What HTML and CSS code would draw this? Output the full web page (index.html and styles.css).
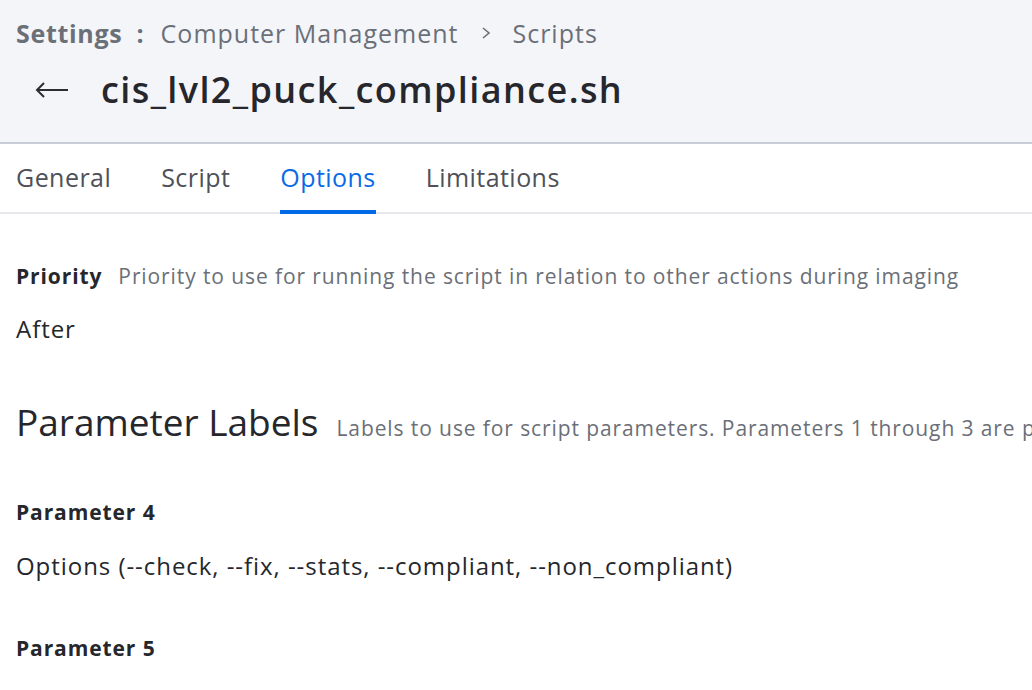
FILE: index.html
```html
<!DOCTYPE html>
<html>
<head>
<meta charset="utf-8">
<link rel="stylesheet" href="styles.css">
</head>
<body>
<header class="head">
  <nav class="crumbs">
    <span class="crumb-root">Settings</span>
    <span class="crumb-sep colon">:</span>
    <span class="crumb">Computer Management</span>
    <span class="crumb-sep chev"><svg width="14" height="14" viewBox="0 0 14 14"><path d="M4 2 L10 7 L4 12" fill="none" stroke="#6b6f78" stroke-width="1.6"/></svg></span>
    <span class="crumb">Scripts</span>
  </nav>
  <div class="title-row">
    <svg class="back" width="34" height="16" viewBox="0 0 34 16"><path d="M33 8 H2 M9 1 L2 8 L9 15" fill="none" stroke="#2b2d33" stroke-width="2"/></svg>
    <h1 class="title">cis_lvl2_puck_compliance.sh</h1>
  </div>
</header>
<div class="tabs">
  <div class="tab">General</div>
  <div class="tab">Script</div>
  <div class="tab active">Options</div>
  <div class="tab">Limitations</div>
</div>
<main class="content">
  <div class="field">
    <div class="label-row"><span class="label">Priority</span><span class="desc">Priority to use for running the script in relation to other actions during imaging</span></div>
    <div class="value">After</div>
  </div>
  <div class="section-head">
    <h2 class="section-title">Parameter Labels</h2>
    <span class="desc">Labels to use for script parameters. Parameters 1 through 3 are predefined</span>
  </div>
  <div class="param">
    <div class="label">Parameter 4</div>
    <div class="value">Options (--check, --fix, --stats, --compliant, --non_compliant)</div>
  </div>
  <div class="param">
    <div class="label">Parameter 5</div>
  </div>
</main>
</body>
</html>
```
FILE: styles.css
```css
* { box-sizing: border-box; }
html, body { margin: 0; padding: 0; }
body {
  width: 1032px;
  height: 690px;
  overflow: hidden;
  font-family: "Open Sans", Lato, sans-serif;
  background: #fff;
  color: #25272c;
}
.head {
  background: #f4f5f9;
  height: 144px;
  border-bottom: 2px solid #c9ced6;
  padding: 17px 0 0 16px;
}
.crumbs {
  display: flex;
  align-items: center;
  font-size: 25px;
  letter-spacing: 1px;
  color: #6b6f78;
  white-space: nowrap;
  height: 32px;
}
.crumb-root { font-weight: 700; color: #6b6f78; letter-spacing: 0.7px; }
.colon { margin: 0 16px 0 14px; font-weight: 700; }
.chev { margin: 0 19px 0 21px; display: flex; align-items: center; }
.title-row {
  display: flex;
  align-items: center;
  margin-top: 16px;
  padding-left: 19px;
}
.back { margin-right: 32px; }
.title {
  margin: 0;
  font-size: 36px;
  font-weight: 600;
  letter-spacing: 1.4px;
  color: #25272c;
}
.tabs {
  display: flex;
  gap: 50px;
  padding: 0 16px;
  height: 70px;
  border-bottom: 2px solid #e7e9ed;
}
.tab {
  font-size: 25px;
  letter-spacing: 0.45px;
  line-height: 33px;
  color: #4e5159;
  padding-top: 17px;
  border-bottom: 4px solid transparent;
  margin-bottom: -2px;
  height: 70px;
}
.tab.active {
  color: #0a6ae6;
  border-bottom-color: #006ae6;
}
.content { padding: 0 0 0 16px; }
.field { padding-top: 49px; }
.label-row { display: flex; align-items: baseline; white-space: nowrap; }
.label { font-size: 21px; line-height: 27px; font-weight: 700; letter-spacing: 0.9px; color: #25272c; }
.desc { font-size: 21px; line-height: 27px; letter-spacing: 0.9px; color: #6b6f78; margin-left: 16px; white-space: nowrap; flex-shrink: 0; }
.value { font-size: 24px; line-height: 31px; letter-spacing: 0.95px; color: #25272c; margin-top: 23px; }
.section-head {
  display: flex;
  align-items: baseline;
  margin-top: 53px;
  white-space: nowrap;
}
.section-title { margin: 0; font-size: 37px; line-height: 50px; font-weight: 400; color: #25272c; flex-shrink: 0; }
.section-head .desc { margin-left: 18px; }
.param { padding-top: 52px; }
.param .value { margin-top: 24px; }
.param + .param { padding-top: 54px; }
```
